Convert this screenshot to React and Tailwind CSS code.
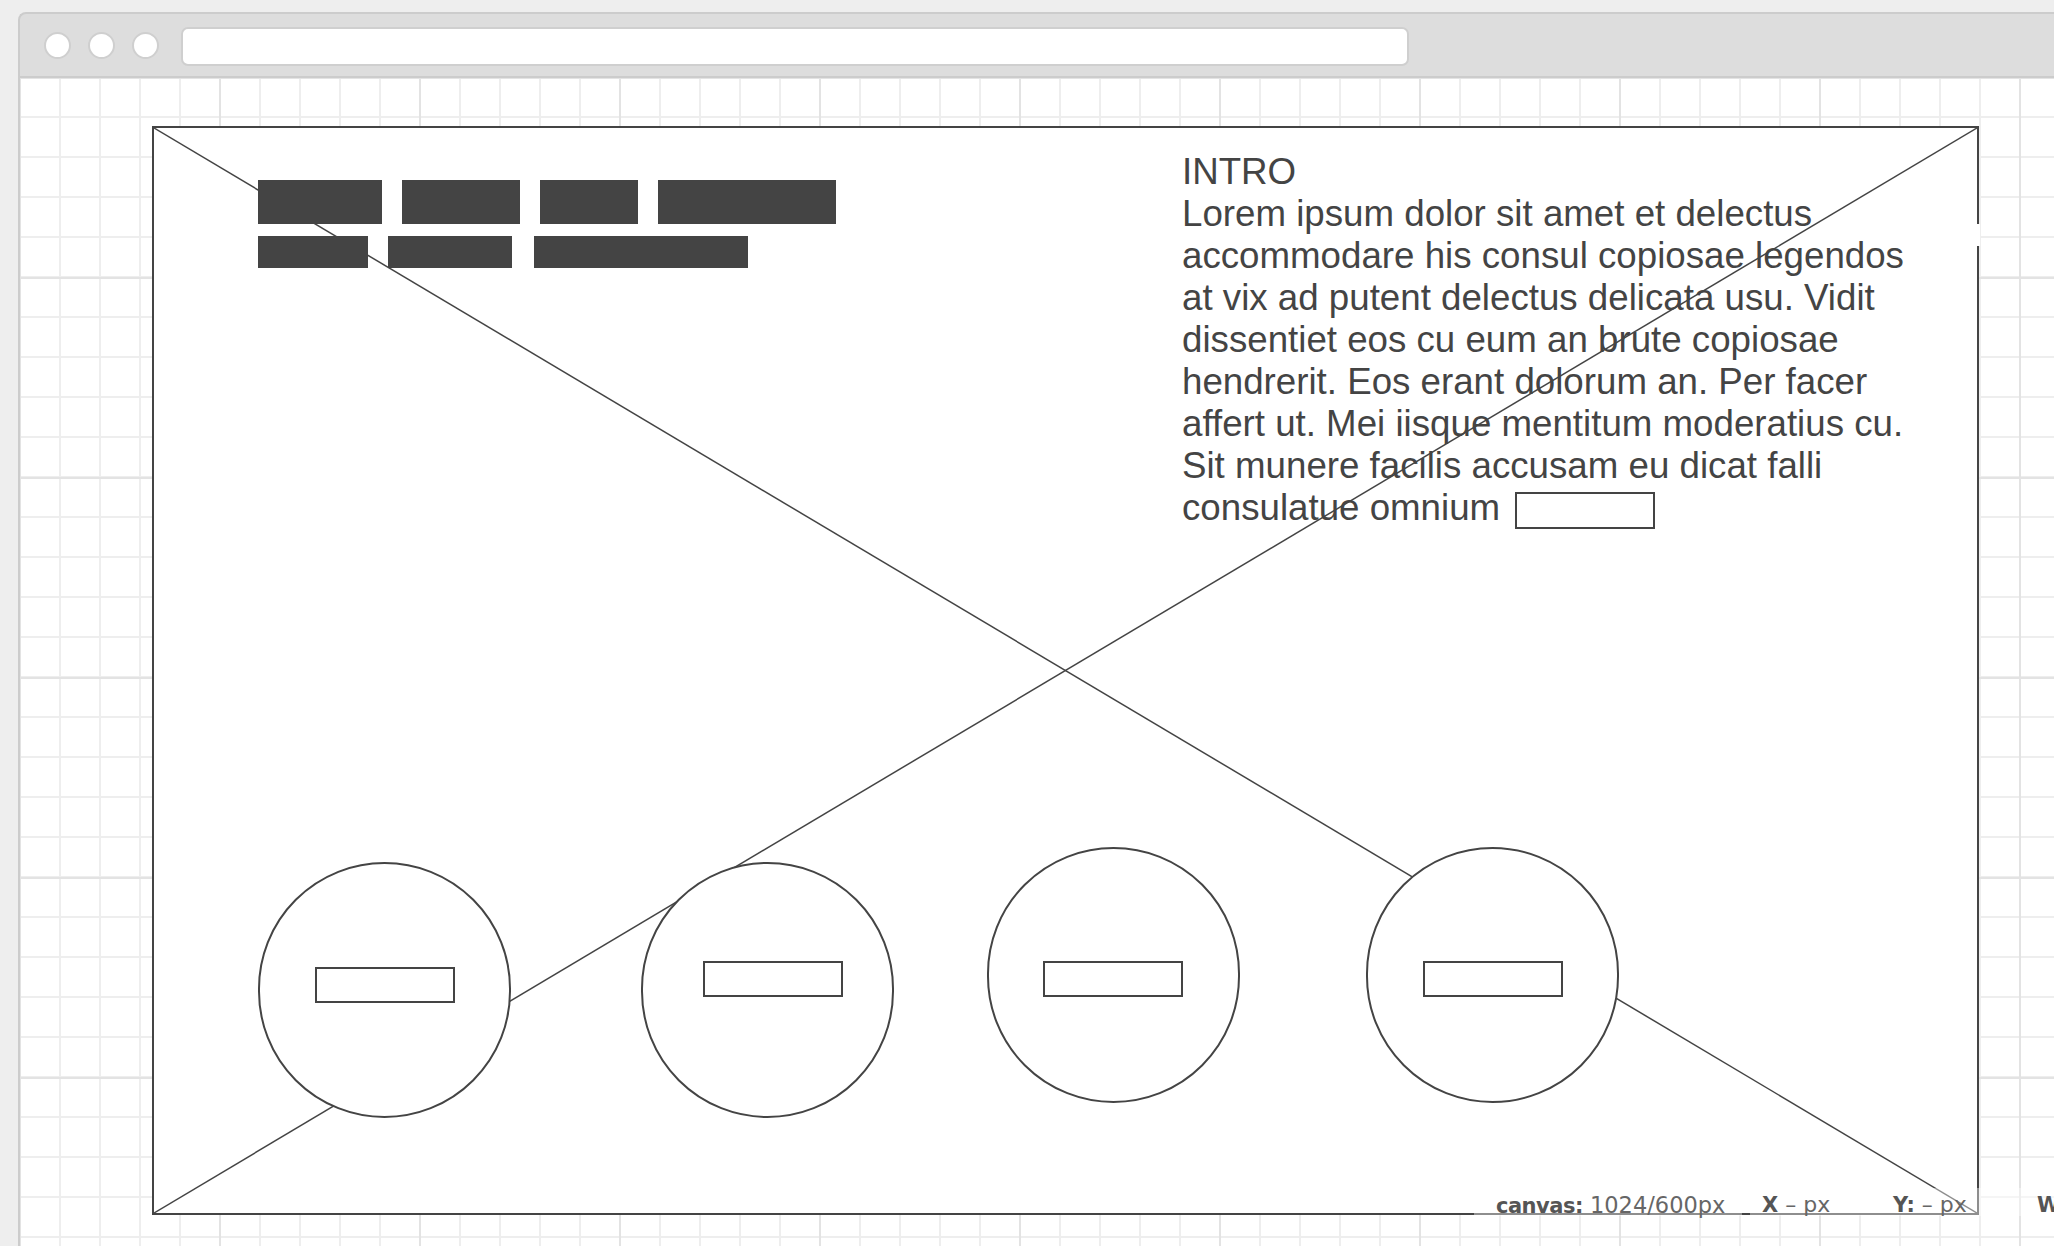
import React from "react";

const lines = [
  "Lorem ipsum dolor sit amet et delectus",
  "accommodare his consul copiosae legendos",
  "at vix ad putent delectus delicata usu. Vidit",
  "dissentiet eos cu eum an brute copiosae",
  "hendrerit. Eos erant dolorum an. Per facer",
  "affert ut. Mei iisque mentitum moderatius cu.",
  "Sit munere facilis accusam eu dicat falli",
];

const circles = [
  { left: "left-[104px] top-[734px]", rect: "ml-[55px] mt-[103px]" },
  { left: "left-[487px] top-[734px]", rect: "ml-[60px] mt-[97px]" },
  { left: "left-[833px] top-[719px]", rect: "ml-[54px] mt-[112px]" },
  { left: "left-[1212px] top-[719px]", rect: "ml-[55px] mt-[112px]" },
];

function Dot() {
  return <div className="w-[27px] h-[27px] rounded-full bg-white border-2 border-[#cfcfcf]" />;
}

export default function App() {
  return (
    <div className="w-[2054px] h-[1246px] overflow-hidden bg-[#eeeeee] pl-[18px] pt-[12px]">
      <div className="w-[2100px] h-[1300px] border-l-2 border-t-2 border-[#cccccc] rounded-tl-[8px] bg-[#dddddd] flex flex-col">
        {/* title bar */}
        <div className="h-[64px] shrink-0 flex items-center pl-[24px] gap-[17px] border-b-2 border-[#cccccc] rounded-tl-[6px]">
          <Dot />
          <Dot />
          <Dot />
          <div className="ml-[5px] w-[1228px] h-[39px] mt-[2px] bg-white border-2 border-[#cfcfcf] rounded-[7px]" />
        </div>
        {/* canvas */}
        <div className="relative flex-1 bg-white bg-[linear-gradient(to_right,#e3e3e3_2px,transparent_2px),linear-gradient(to_bottom,#e3e3e3_2px,transparent_2px),linear-gradient(to_right,#eeeeee_2px,transparent_2px),linear-gradient(to_bottom,#eeeeee_2px,transparent_2px)] bg-[size:200px_200px,200px_200px,40px_40px,40px_40px] bg-[position:199px_199px,199px_199px,39px_38px,39px_38px] pt-[48px] pl-[132px]">
          {/* wireframe box */}
          <div className="relative w-[1827px] h-[1089px] border-2 border-[#444444] bg-white">
            <svg className="absolute inset-0 w-full h-full" viewBox="0 0 100 100" preserveAspectRatio="none">
              <line x1="0" y1="0" x2="100" y2="100" stroke="#444444" strokeWidth="1.5" vectorEffect="non-scaling-stroke" />
              <line x1="100" y1="0" x2="0" y2="100" stroke="#444444" strokeWidth="1.5" vectorEffect="non-scaling-stroke" />
            </svg>
            <div className="relative flex items-start">
              {/* nav bars */}
              <div className="ml-[104px] mt-[52px] flex flex-col gap-[12px]">
                <div className="flex gap-[20px]">
                  <div className="w-[124px] h-[44px] bg-[#444444]" />
                  <div className="w-[118px] h-[44px] bg-[#444444]" />
                  <div className="w-[98px] h-[44px] bg-[#444444]" />
                  <div className="w-[178px] h-[44px] bg-[#444444]" />
                </div>
                <div className="flex gap-[20px]">
                  <div className="w-[110px] h-[32px] bg-[#444444]" />
                  <div className="w-[124px] h-[32px] bg-[#444444]" />
                  <div className="ml-[2px] w-[214px] h-[32px] bg-[#444444]" />
                </div>
              </div>
              {/* intro text */}
              <div className="ml-[346px] mt-[23px] text-[36.7px] leading-[42px] text-[#444444] font-['Liberation_Sans',Arial,sans-serif]">
                <div className="whitespace-nowrap">INTRO</div>
                {lines.map((l) => (
                  <div key={l} className="whitespace-nowrap">{l}</div>
                ))}
                <div className="whitespace-nowrap">
                  consulatue omnium
                  <span className="inline-block align-middle ml-[15px] w-[140px] h-[37px] border-2 border-[#444444]" />
                </div>
              </div>
            </div>
            {/* circles */}
            {circles.map((c, i) => (
              <div
                key={i}
                className={`absolute ${c.left} w-[253px] h-[256px] rounded-full border-2 border-[#444444] bg-white`}
              >
                <div className={`${c.rect} w-[140px] h-[36px] border-2 border-[#444444]`} />
              </div>
            ))}
          </div>
          {/* small gap cover on right border */}
          <div className="absolute left-[1955px] top-[146px] w-[5px] h-[22px] bg-white" />
          {/* status overlays */}
          <div className="absolute left-[1454px] top-[1110px] w-[268px] h-[28px] bg-white/40 pl-[22px] pt-[7px] text-[22.5px] leading-[20px] text-[#666666] whitespace-nowrap font-['DejaVu_Sans',sans-serif]">
            <span className="font-bold text-[21px] text-[#555555] tracking-[-0.5px]">canvas:</span> 1024/600px
          </div>
          <div className="absolute left-[1730px] top-[1110px] w-[400px] h-[28px] bg-white/40 pl-[12px] pt-[7px] flex text-[22px] leading-[20px] text-[#666666] whitespace-nowrap font-['DejaVu_Sans',sans-serif]">
            <div className="w-[131px]"><span className="font-bold text-[21px] text-[#555555]">X</span> – px</div>
            <div className="w-[144px]"><span className="font-bold text-[21px] text-[#555555]">Y:</span> – px</div>
            <div><span className="font-bold text-[21px] text-[#555555]">W:</span> – px</div>
          </div>
        </div>
      </div>
    </div>
  );
}
